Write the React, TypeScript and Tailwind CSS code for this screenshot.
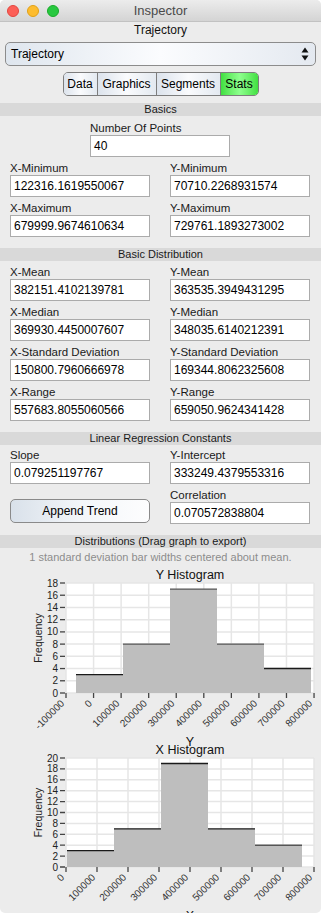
import React from "react";

const font = { fontFamily: '"Liberation Sans", Arial, sans-serif' };

interface FieldProps {
  label: string;
  value: string;
}

function Field({ label, value }: FieldProps) {
  return (
    <div className="flex flex-col">
      <div className="h-[14px] leading-[14px] text-[11.5px] text-[#1a1a1a] whitespace-nowrap">
        {label}
      </div>
      <div className="h-[22px] border border-[#ababab] bg-white pl-[3px] text-[12px] leading-[20px] text-black whitespace-nowrap">
        {value}
      </div>
    </div>
  );
}

function Band({ title }: { title: string }) {
  return (
    <div className="h-[13px] bg-[#d9d9d9] text-center text-[11px] leading-[13px] text-[#1a1a1a]">
      {title}
    </div>
  );
}

interface HistProps {
  title: string;
  axis: string;
  height: number;
  top: number;
  bottom: number;
  maxY: number;
  ticks: { label: string; x: number }[];
  bars: { x0: number; x1: number; v: number; dark?: boolean }[];
}

function Histogram({ title, axis, height, top, bottom, maxY, ticks, bars }: HistProps) {
  const left = 66;
  const right = 314;
  const py = (v: number) => bottom - (v / maxY) * (bottom - top);
  const yTicks: number[] = [];
  for (let v = 0; v <= maxY; v += 2) yTicks.push(v);

  return (
    <svg width={321} height={height} className="block overflow-visible" style={font}>
      <text x={190} y={top - 4} textAnchor="middle" fontSize={12.5} fill="#111">
        {title}
      </text>
      <rect x={left} y={top} width={right - left} height={bottom - top} fill="#fff" />
      {yTicks.map((v) => (
        <line key={"h" + v} x1={left} x2={right} y1={py(v)} y2={py(v)} stroke="#e6e6e6" strokeWidth={1.5} />
      ))}
      {ticks.map((t) => (
        <line key={"v" + t.label} x1={t.x} x2={t.x} y1={top} y2={bottom} stroke="#e6e6e6" strokeWidth={1.5} />
      ))}
      {bars.map((b, i) => (
        <g key={i}>
          <rect x={b.x0} y={py(b.v)} width={b.x1 - b.x0} height={bottom - py(b.v)} fill="#bebebe" />
          <line x1={b.x0} x2={b.x1} y1={py(b.v)} y2={py(b.v)} stroke={b.dark ? "#555" : "#1a1a1a"} strokeWidth={1.4} />
        </g>
      ))}
      {yTicks.map((v) => (
        <g key={"yt" + v}>
          <line x1={60} x2={65} y1={py(v)} y2={py(v)} stroke="#444" strokeWidth={1.3} />
          <text x={58} y={py(v) + 3.5} textAnchor="end" fontSize={10} fill="#222">
            {v}
          </text>
        </g>
      ))}
      {ticks.map((t) => (
        <g key={"xt" + t.label}>
          <line x1={t.x} x2={t.x} y1={bottom} y2={bottom + 5} stroke="#444" strokeWidth={1.3} />
          <text
            transform={`translate(${t.x - 1} ${bottom + 11}) rotate(-45)`}
            textAnchor="end"
            fontSize={10}
            fill="#333"
          >
            {t.label}
          </text>
        </g>
      ))}
      <text
        transform={`translate(42 ${(top + bottom) / 2}) rotate(-90)`}
        textAnchor="middle"
        fontSize={10.5}
        fill="#222"
      >
        Frequency
      </text>
      <text x={190} y={bottom + 53} textAnchor="middle" fontSize={12.5} fill="#111">
        {axis}
      </text>
    </svg>
  );
}

export default function App() {
  const yTicks = Array.from({ length: 10 }, (_, i) => ({
    label: String((i - 1) * 100000),
    x: 66 + i * 27.56,
  }));
  const xTicks = Array.from({ length: 9 }, (_, i) => ({
    label: String(i * 100000),
    x: 66 + i * 31,
  }));

  return (
    <div className="w-[321px] h-[913px] bg-white overflow-hidden" style={font}>
      <div className="h-[913px] bg-[#ececec] rounded-[5px] overflow-hidden flex flex-col">
        {/* title bar */}
        <div className="relative h-[22px] shrink-0 bg-gradient-to-b from-[#ececec] to-[#d4d4d4] border-b border-[#c2c2c2] flex items-center justify-center">
          <div className="absolute left-[7px] top-[5px] flex gap-[8px]">
            <span className="w-[12px] h-[12px] rounded-full bg-[#fc5f57] border border-[#e2463f]" />
            <span className="w-[12px] h-[12px] rounded-full bg-[#fdbc2e] border border-[#e1a116]" />
            <span className="w-[12px] h-[12px] rounded-full bg-[#28c840] border border-[#1aab29]" />
          </div>
          <span className="text-[13px] text-[#4a4a4a]">Inspector</span>
        </div>

        <div className="h-[18px] shrink-0 text-center text-[12px] leading-[17px] text-[#111]">Trajectory</div>

        {/* popup */}
        <div className="mx-[5px] mt-[2px] h-[24px] shrink-0 rounded-[5px] border border-[#8c8c8c] bg-gradient-to-r from-[#dfe6ee] via-[#fbfcfe] to-[#e4e9f0] flex items-center justify-between pl-[5px] pr-[6px]">
          <span className="text-[12px] text-black">Trajectory</span>
          <svg width="8" height="14" viewBox="0 0 8 14">
            <path d="M4 0.5 L7.5 5.5 L0.5 5.5 Z" fill="#111" />
            <path d="M4 13.5 L7.5 8.5 L0.5 8.5 Z" fill="#111" />
          </svg>
        </div>

        {/* segmented control */}
        <div className="mt-[6px] h-[24px] shrink-0 flex justify-center">
          <div className="flex h-[24px] rounded-[5px] border border-[#7d7d7d] overflow-hidden text-[12px] text-black">
            <div className="w-[34px] flex items-center justify-center bg-gradient-to-r from-[#dce3ec] via-[#fafbfd] to-[#e3e9f0] border-r border-[#7d7d7d]">
              Data
            </div>
            <div className="w-[59px] flex items-center justify-center bg-gradient-to-r from-[#dce3ec] via-[#fafbfd] to-[#e3e9f0] border-r border-[#7d7d7d]">
              Graphics
            </div>
            <div className="w-[64px] flex items-center justify-center bg-gradient-to-r from-[#dce3ec] via-[#fafbfd] to-[#e3e9f0] border-r border-[#7d7d7d]">
              Segments
            </div>
            <div className="w-[37px] flex items-center justify-center bg-gradient-to-r from-[#3fe03f] via-[#8dff8d] to-[#3fe03f]">
              Stats
            </div>
          </div>
        </div>

        {/* Basics */}
        <div className="mt-[7px] shrink-0">
          <Band title="Basics" />
        </div>
        <div className="pt-[6px] pb-[11px] shrink-0">
          <div className="ml-[90px] w-[140px] flex flex-col">
            <div className="h-[13px] leading-[13px] text-[11.5px] text-[#1a1a1a]">Number Of Points</div>
            <div className="h-[22px] border border-[#ababab] bg-white pl-[3px] text-[12px] leading-[20px] text-black">40</div>
          </div>
          <div className="mt-[4px] grid grid-cols-2 gap-x-[20px] gap-y-[4px] pl-[10px] pr-[11px]">
            <Field label="X-Minimum" value="122316.1619550067" />
            <Field label="Y-Minimum" value="70710.2268931574" />
            <Field label="X-Maximum" value="679999.9674610634" />
            <Field label="Y-Maximum" value="729761.1893273002" />
          </div>
        </div>

        {/* Basic Distribution */}
        <Band title="Basic Distribution" />
        <div className="pt-[4px] pb-[11px] shrink-0 grid grid-cols-2 gap-x-[20px] gap-y-[4px] pl-[10px] pr-[11px]">
          <Field label="X-Mean" value="382151.4102139781" />
          <Field label="Y-Mean" value="363535.3949431295" />
          <Field label="X-Median" value="369930.4450007607" />
          <Field label="Y-Median" value="348035.6140212391" />
          <Field label="X-Standard Deviation" value="150800.7960666978" />
          <Field label="Y-Standard Deviation" value="169344.8062325608" />
          <Field label="X-Range" value="557683.8055060566" />
          <Field label="Y-Range" value="659050.9624341428" />
        </div>

        {/* Linear Regression */}
        <Band title="Linear Regression Constants" />
        <div className="pt-[3px] pb-[11px] shrink-0 grid grid-cols-2 gap-x-[20px] pl-[10px] pr-[11px]">
          <div className="flex flex-col">
            <Field label="Slope" value="0.079251197767" />
            <button className="mt-[15px] h-[24px] rounded-[5px] border border-[#8a8a8a] bg-gradient-to-r from-[#d9e1ea] via-[#f3f6f9] to-[#fdfdfe] text-[12px] text-black">
              Append Trend
            </button>
          </div>
          <div className="flex flex-col gap-[4px]">
            <Field label="Y-Intercept" value="333249.4379553316" />
            <Field label="Correlation" value="0.070572838804" />
          </div>
        </div>

        {/* Distributions */}
        <Band title="Distributions (Drag graph to export)" />
        <div className="mt-[2px] h-[14px] shrink-0 text-center text-[11px] leading-[14px] text-[#8c8c8c]">
          1 standard deviation bar widths centered about mean.
        </div>

        <div className="h-[176px] shrink-0">
          <Histogram
            title="Y Histogram"
            axis="Y"
            height={176}
            top={19}
            bottom={129}
            maxY={18}
            ticks={yTicks}
            bars={[
              { x0: 76, x1: 123, v: 3 },
              { x0: 123, x1: 170, v: 8, dark: true },
              { x0: 170, x1: 217, v: 17, dark: true },
              { x0: 217, x1: 264, v: 8, dark: true },
              { x0: 264, x1: 311, v: 4 },
            ]}
          />
        </div>
        <div className="h-[173px] shrink-0">
          <Histogram
            title="X Histogram"
            axis="X"
            height={173}
            top={18}
            bottom={127}
            maxY={20}
            ticks={xTicks}
            bars={[
              { x0: 67, x1: 114, v: 3 },
              { x0: 114, x1: 161, v: 7 },
              { x0: 161, x1: 208, v: 19 },
              { x0: 208, x1: 255, v: 7 },
              { x0: 255, x1: 302, v: 4, dark: true },
            ]}
          />
        </div>
      </div>
    </div>
  );
}
